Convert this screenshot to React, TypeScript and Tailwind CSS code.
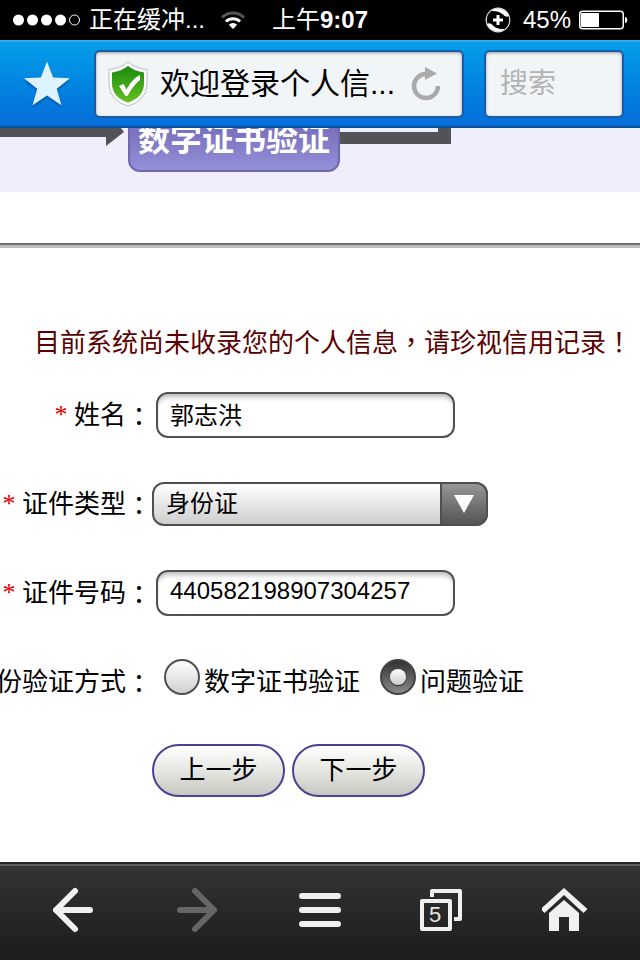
import { useState } from "react";
import type { ReactNode } from "react";

function Wide({ children }: { children: ReactNode }) {
  return <span className="font-['Noto_Sans_CJK_TC',sans-serif]">{children}</span>;
}

function StatusBar() {
  return (
    <div className="grid h-10 grid-cols-[1fr_auto_1fr] items-center bg-black px-3 text-2xl leading-10 text-white">
      <div className="flex items-center gap-2">
        <svg width="69" height="12" viewBox="0 0 69 12" fill="#fff">
          <circle cx="6.5" cy="6" r="5.5" />
          <circle cx="20.5" cy="6" r="5.5" />
          <circle cx="34.5" cy="6" r="5.5" />
          <circle cx="48.5" cy="6" r="5.5" />
          <circle cx="62.5" cy="6" r="5" fill="none" stroke="#fff" />
        </svg>
        <span>正在缓冲...</span>
        <svg className="ml-2" width="24" height="18" viewBox="0 0 24 18" fill="none" strokeWidth="3">
          <path d="M1 6.5a15.6 15.6 0 0 1 22 0" stroke="#555" />
          <path d="M5 10.5a10 10 0 0 1 14 0" stroke="#fff" />
          <path d="M12 18l-4.2-4.2a6 6 0 0 1 8.4 0z" fill="#fff" />
        </svg>
      </div>
      <div>
        上午<span className="font-bold">9:07</span>
      </div>
      <div className="flex items-center justify-end gap-2">
        <svg width="26" height="26" viewBox="0 0 26 26" fill="none">
          <circle cx="13" cy="13" r="11.8" stroke="#ddd" strokeWidth="1.2" />
          <path d="M6 4A11.500 11.500 0 0 1 24 9C22 10.500 20 9.500 18 7.500 15 4.500 10 3.500 6 4z" fill="#fff" />
          <path d="M20 22A11.500 11.500 0 0 1 2 17C4 15.500 6 16.500 8 18.500 11 21.500 16 22.500 20 22z" fill="#fff" />
          <path d="M13 8v10M8 13h10" stroke="#fff" strokeWidth="3" />
        </svg>
        <span className="ml-1">45%</span>
        <svg width="49" height="20" viewBox="0 0 49 20">
          <rect x="0.75" y="1.25" width="43.5" height="17.5" rx="3" fill="none" stroke="#fff" strokeWidth="1.5" />
          <rect x="2" y="3" width="18" height="14" rx="1" fill="#fff" />
          <path d="M46 7c3 0 3 6 0 6z" fill="#fff" />
        </svg>
      </div>
    </div>
  );
}

function AddressBar() {
  return (
    <header className="flex h-[88px] items-center border-t-2 border-b-2 border-t-[#35aee8] border-b-[#0a4f9a] bg-linear-to-b from-[#069ee9] to-[#076cd9] pr-4">
      <button type="button" aria-label="收藏" className="flex w-[94px] justify-center">
        <svg width="48" height="48" viewBox="0 0 48 48" className="drop-shadow-[0_2px_1px_#0558a8]">
          <path d="M24 1.5l6.2 16 16.8.7-13.2 10.6 4.6 16.5L24 35.6 9.6 45.3l4.6-16.5L1 18.2l16.8-.7z" fill="#def3ff" />
        </svg>
      </button>
      <div className="flex h-[68px] flex-1 items-center rounded-md border-2 border-[#1b5ba4] bg-[#f2f5f8] pr-5 pl-3 shadow-[inset_0_1px_3px_#999]">
        <svg className="shrink-0" width="40" height="46" viewBox="0 0 40 46">
          <defs>
            <linearGradient id="shield" x1="0" y1="0" x2="0" y2="1">
              <stop offset="0" stopColor="#178a0c" />
              <stop offset="1" stopColor="#68c023" />
            </linearGradient>
          </defs>
          <path d="M20 1c5 4 11 6.500 19 7.500v14C39 34 31 42 20 45 9 42 1 34 1 22.500v-14C9 7.500 15 5 20 1z" fill="#fff" stroke="#bbb" />
          <path d="M20 5c4.500 3.500 9.500 5.500 16 6.500v11C36 32 29.500 38.500 20 41.500 10.500 38.500 4 32 4 22.500v-11C10.500 10.500 15.500 8.500 20 5z" fill="url(#shield)" />
          <path d="M11 25l4.500-2 3 5.500C22 22 26 17 32 14v5C27 23 22.500 29 19.500 35h-2z" fill="#fff" />
        </svg>
        <input
          aria-label="网址"
          defaultValue="欢迎登录个人信..."
          className="ml-3 h-full w-full min-w-0 flex-1 bg-transparent pb-1.5 text-3xl text-black outline-none"
        />
        <button type="button" aria-label="刷新">
          <svg width="32" height="36" viewBox="0 0 32 36">
            <path d="M28 20A12 12 0 1 1 16 8" fill="none" stroke="#aaa" strokeWidth="4.500" />
            <path d="M15 1l12 6.500L15 14z" fill="#aaa" />
          </svg>
        </button>
      </div>
      <input
        type="search"
        aria-label="搜索"
        placeholder="搜索"
        className="ml-5 h-[68px] w-[140px] appearance-none rounded-md border-2 border-[#1b5ba4] bg-[#f2f5f8] px-3.5 text-[28px] shadow-[inset_0_1px_3px_#999] outline-none placeholder:text-[#b3b3b3]"
      />
    </header>
  );
}

function StepBanner() {
  return (
    <div className="flex h-16 items-start overflow-hidden bg-[#f0edfd]">
      <svg className="shrink-0" width="128" height="20" viewBox="0 0 128 20" fill="#535257">
        <path d="M0 0h121l3 4-18 14V9H0z" />
      </svg>
      <div className="-mt-8 flex h-[76px] w-[212px] shrink-0 items-center justify-center rounded-xl border-2 border-[#7068ad] bg-linear-to-b from-[#6f64b0] via-[#7d74c0] to-[#9390d8] pt-3 text-[32px] leading-none font-bold whitespace-nowrap text-white">
        数字证书验证
      </div>
      <svg className="shrink-0" width="112" height="20" viewBox="0 0 112 20" fill="#535257">
        <path d="M0 4h98V0h13v16H0z" />
      </svg>
    </div>
  );
}

function Row({ id, label, required, children }: { id?: string; label: string; required?: boolean; children: ReactNode }) {
  const text = (
    <>
      {required && <span className="font-['Liberation_Serif',serif] text-[#d00]">* </span>}
      {label}
      <Wide>：</Wide>
    </>
  );
  const style = "flex w-[152px] shrink-0 justify-end text-[26px] leading-[46px] whitespace-pre";
  return (
    <div className="flex h-[46px] items-center">
      {id ? (
        <label htmlFor={id} className={style}>{text}</label>
      ) : (
        <span className={style}>{text}</span>
      )}
      {children}
    </div>
  );
}

const field =
  "ml-1 h-[46px] w-[299px] rounded-xl border-2 border-[#505050] bg-white px-3 pb-1 text-2xl text-black shadow-[inset_0_5px_5px_-2px_#bbb] outline-none";

const pill =
  "h-[53px] w-[133px] rounded-full border-2 border-[#4b4193] bg-linear-to-b from-white via-[#e6e6e2] to-[#c8c7c1] text-[26px] text-black";

function Radio({ label, checked, onChange }: { label: string; checked: boolean; onChange: () => void }) {
  return (
    <label className="flex h-[46px] items-start gap-1 text-[26px] leading-[46px] whitespace-nowrap">
      <input
        type="radio"
        name="method"
        checked={checked}
        onChange={onChange}
        className="grid size-9 appearance-none place-items-center rounded-full border-2 border-[#505050] bg-linear-to-b from-white to-[#d0d0d0] checked:border-[#444] checked:from-[#333] checked:to-[#8a8a8a] checked:before:size-4 checked:before:rounded-full checked:before:bg-linear-to-b checked:before:from-white checked:before:to-[#ccc] checked:before:shadow-[0_1px_1px_#222] checked:before:content-['']"
      />
      {label}
    </label>
  );
}

function Toolbar() {
  return (
    <nav className="grid h-[98px] grid-cols-5 items-center border-t-2 border-[#222] bg-linear-to-b from-[#343434] to-[#1c1c1c] px-3 pb-1 shadow-[inset_0_2px_0_#5c5c5c]">
      <button type="button" aria-label="后退" className="flex justify-center">
        <svg width="48" height="48" viewBox="0 0 48 48" fill="none" stroke="#f0f0f0" strokeWidth="6" strokeLinecap="round" strokeLinejoin="round">
          <path d="M25 5L6 24l19 19M6 24h34" />
        </svg>
      </button>
      <button type="button" aria-label="前进" className="flex justify-center">
        <svg width="48" height="48" viewBox="0 0 48 48" fill="none" stroke="#666" strokeWidth="6" strokeLinecap="round" strokeLinejoin="round">
          <path d="M22 5l19 19-19 19M41 24H7" />
        </svg>
      </button>
      <button type="button" aria-label="菜单" className="flex justify-center">
        <svg width="48" height="48" viewBox="0 0 48 48" stroke="#f0f0f0" strokeWidth="6" strokeLinecap="round">
          <path d="M6 10h36M6 24h36M6 38h36" />
        </svg>
      </button>
      <button type="button" aria-label="窗口" className="flex justify-center">
        <svg width="48" height="48" viewBox="0 0 48 48" fill="none" stroke="#f0f0f0" strokeWidth="4" strokeLinejoin="round">
          <path d="M13 11V5h28v28h-6" />
          <rect x="3" y="15" width="28" height="28" />
          <text x="16" y="36" textAnchor="middle" fill="#e5e5e5" stroke="none" fontSize="22">5</text>
        </svg>
      </button>
      <button type="button" aria-label="主页" className="flex justify-center">
        <svg width="48" height="48" viewBox="0 0 48 48" fill="#f0f0f0">
          <path d="M22 2l23.500 21-4 4L22 9 2.500 27l-4-4z" />
          <path d="M22 14l15 13v18H27V31H17v14H7V27z" />
        </svg>
      </button>
    </nav>
  );
}

export default function App() {
  const [method, setMethod] = useState("question");

  return (
    <div className="flex min-h-screen flex-col overflow-hidden bg-white font-['Liberation_Sans','Noto_Sans_CJK_SC',sans-serif] text-black">
      <StatusBar />
      <AddressBar />
      <main className="flex-1">
        <StepBanner />
        <hr className="mt-[51px] h-[5px] border-t-2 border-b-2 border-t-[#707070] border-b-[#bdbdbd] bg-[#bdbdbd]" />
        <p className="mt-[74px] ml-[34px] text-[26px] leading-[38px] whitespace-nowrap text-[#5a0000]">
          目前系统尚未收录您的个人信息<Wide>，</Wide>请珍视信用记录<Wide>！</Wide>
        </p>
        <form className="mt-[30px] flex flex-col gap-[43px]" onSubmit={(e) => e.preventDefault()}>
          <Row id="name" label="姓名" required>
            <input id="name" defaultValue="郭志洪" className={field} />
          </Row>
          <Row id="type" label="证件类型" required>
            <div className="relative">
              <select
                id="type"
                className="block h-11 w-[336px] appearance-none rounded-xl border-2 border-[#505050] bg-linear-to-b from-white to-[#cecece] px-3 text-2xl text-black outline-none"
              >
                <option>身份证</option>
              </select>
              <div className="pointer-events-none absolute inset-y-0 right-0 flex w-12 items-center justify-center rounded-r-xl border-2 border-[#505050] bg-linear-to-b from-[#969696] to-[#555]">
                <svg width="20" height="20" viewBox="0 0 20 20">
                  <path d="M0 1h20L10 19z" fill="#fff" />
                </svg>
              </div>
            </div>
          </Row>
          <Row id="number" label="证件号码" required>
            <input id="number" defaultValue="440582198907304257" className={field} />
          </Row>
          <Row label="身份验证方式">
            <div className="ml-3 flex gap-5">
              <Radio label="数字证书验证" checked={method === "cert"} onChange={() => setMethod("cert")} />
              <Radio label="问题验证" checked={method === "question"} onChange={() => setMethod("question")} />
            </div>
          </Row>
          <div className="-mt-1 flex gap-[7px] pl-[152px]">
            <button type="button" className={pill}>上一步</button>
            <button type="submit" className={pill}>下一步</button>
          </div>
        </form>
      </main>
      <Toolbar />
    </div>
  );
}
